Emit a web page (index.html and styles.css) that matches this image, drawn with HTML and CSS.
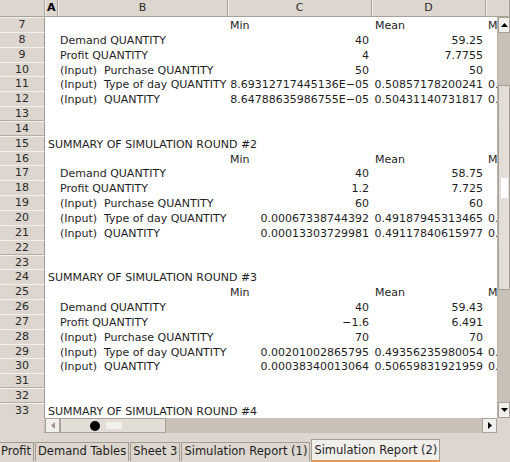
FILE: index.html
```html
<!DOCTYPE html>
<html>
<head>
<meta charset="utf-8">
<link rel="stylesheet" href="styles.css">
</head>
<body>
<div class="app">
  <div class="colhead">
    <div class="corner"></div>
    <div class="ch cur">A</div>
    <div class="ch">B</div>
    <div class="ch">C</div>
    <div class="ch">D</div>
    <div class="ch last"></div>
  </div>
  <div class="main">
    <div class="sheet">
      <div class="row"><div class="rn">7</div><div></div><div></div><div class="c">Min</div><div class="c l3">Mean</div><div class="c">M</div></div>
      <div class="row"><div class="rn">8</div><div></div><div class="c">Demand QUANTITY</div><div class="c r">40</div><div class="c r">59.25</div><div></div></div>
      <div class="row"><div class="rn">9</div><div></div><div class="c">Profit QUANTITY</div><div class="c r">4</div><div class="c r">7.7755</div><div></div></div>
      <div class="row"><div class="rn">10</div><div></div><div class="c">(Input)  Purchase QUANTITY</div><div class="c r">50</div><div class="c r">50</div><div></div></div>
      <div class="row"><div class="rn">11</div><div></div><div class="c">(Input)  Type of day QUANTITY</div><div class="c r">8.69312717445136E−05</div><div class="c r">0.50857178200241</div><div class="c">0.</div></div>
      <div class="row"><div class="rn">12</div><div></div><div class="c">(Input)  QUANTITY</div><div class="c r">8.64788635986755E−05</div><div class="c r">0.50431140731817</div><div class="c">0.</div></div>
      <div class="row"><div class="rn">13</div></div>
      <div class="row"><div class="rn">14</div></div>
      <div class="row"><div class="rn">15</div><div class="c title">SUMMARY OF SIMULATION ROUND #2</div></div>
      <div class="row"><div class="rn">16</div><div></div><div></div><div class="c">Min</div><div class="c l3">Mean</div><div class="c">M</div></div>
      <div class="row"><div class="rn">17</div><div></div><div class="c">Demand QUANTITY</div><div class="c r">40</div><div class="c r">58.75</div><div></div></div>
      <div class="row"><div class="rn">18</div><div></div><div class="c">Profit QUANTITY</div><div class="c r">1.2</div><div class="c r">7.725</div><div></div></div>
      <div class="row"><div class="rn">19</div><div></div><div class="c">(Input)  Purchase QUANTITY</div><div class="c r">60</div><div class="c r">60</div><div></div></div>
      <div class="row"><div class="rn">20</div><div></div><div class="c">(Input)  Type of day QUANTITY</div><div class="c r">0.00067338744392</div><div class="c r">0.49187945313465</div><div class="c">0.</div></div>
      <div class="row"><div class="rn">21</div><div></div><div class="c">(Input)  QUANTITY</div><div class="c r">0.00013303729981</div><div class="c r">0.49117840615977</div><div class="c">0.</div></div>
      <div class="row"><div class="rn">22</div></div>
      <div class="row"><div class="rn">23</div></div>
      <div class="row"><div class="rn">24</div><div class="c title">SUMMARY OF SIMULATION ROUND #3</div></div>
      <div class="row"><div class="rn">25</div><div></div><div></div><div class="c">Min</div><div class="c l3">Mean</div><div class="c">M</div></div>
      <div class="row"><div class="rn">26</div><div></div><div class="c">Demand QUANTITY</div><div class="c r">40</div><div class="c r">59.43</div><div></div></div>
      <div class="row"><div class="rn">27</div><div></div><div class="c">Profit QUANTITY</div><div class="c r">−1.6</div><div class="c r">6.491</div><div></div></div>
      <div class="row"><div class="rn">28</div><div></div><div class="c">(Input)  Purchase QUANTITY</div><div class="c r">70</div><div class="c r">70</div><div></div></div>
      <div class="row"><div class="rn">29</div><div></div><div class="c">(Input)  Type of day QUANTITY</div><div class="c r">0.00201002865795</div><div class="c r">0.49356235980054</div><div class="c">0.</div></div>
      <div class="row"><div class="rn">30</div><div></div><div class="c">(Input)  QUANTITY</div><div class="c r">0.00038340013064</div><div class="c r">0.50659831921959</div><div class="c">0.</div></div>
      <div class="row"><div class="rn">31</div></div>
      <div class="row"><div class="rn">32</div></div>
      <div class="row"><div class="rn">33</div><div class="c title">SUMMARY OF SIMULATION ROUND #4</div></div>
    </div>
    <div class="vscroll">
      <div class="btn"><svg width="7" height="4" viewBox="0 0 7 4"><path d="M0 4 L3.5 0 L7 4 Z" fill="#000"/></svg></div>
      <div class="vtrack-top"></div>
      <div class="vthumb"><div class="grip"></div></div>
      <div class="vtrack"></div>
      <div class="btn"><svg width="7" height="4" viewBox="0 0 7 4"><path d="M0 0 L3.5 4 L7 0 Z" fill="#000"/></svg></div>
    </div>
  </div>
  <div class="hbar">
    <div class="hcorner"></div>
    <div class="hscroll">
      <div class="hbtn"><svg width="4" height="7" viewBox="0 0 4 7"><path d="M4 0 L0 3.5 L4 7 Z" fill="#9a948c"/></svg></div>
      <div class="hthumb"><div class="dot"></div><div class="hgrip"></div></div>
      <div class="htrack"></div>
      <div class="hbtn"><svg width="4" height="7" viewBox="0 0 4 7"><path d="M0 0 L4 3.5 L0 7 Z" fill="#000"/></svg></div>
    </div>
    <div class="rcorner"></div>
  </div>
  <div class="tabs">
    <div class="tab first">Profit</div>
    <div class="tab">Demand Tables</div>
    <div class="tab">Sheet 3</div>
    <div class="tab">Simulation Report (1)</div>
    <div class="tab active">Simulation Report (2)</div>
  </div>
</div>
</body>
</html>
```
FILE: styles.css
```css
* { box-sizing: border-box; }
body {
  margin: 0;
  width: 510px;
  height: 462px;
  overflow: hidden;
  font-family: "DejaVu Sans", sans-serif;
  font-size: 11px;
  color: #1e1e1e;
  background: #dcd6ce;
}
.app { display: flex; flex-direction: column; width: 510px; height: 462px; }

.colhead {
  display: grid;
  grid-template-columns: 45px 13px 170px 144px 114px 24px;
  height: 17px;
  background: #dcd6ce;
  border-bottom: 1px solid #a8a198;
}
.colhead > div {
  border-right: 1px solid #aaa39a;
  box-shadow: inset 1px 0 #f3f0ec;
  text-align: center;
  line-height: 16px;
  color: #2a2a2a;
}
.colhead .corner { box-shadow: none; }
.colhead .cur { font-weight: bold; color: #000; text-align: left; padding-left: 2px; }

.main { display: flex; height: 401px; }
.sheet { width: 497px; overflow: hidden; background: #fff; }
.row {
  display: grid;
  grid-template-columns: 45px 13px 170px 144px 114px 40px;
  height: 14.85px;
}
.rn {
  background: #dcd6ce;
  text-align: center;
  border-top: 1px solid #f3f0ec;
  border-bottom: 1px solid #b4ada4;
  border-right: 1px solid #9f988f;
  line-height: 13px;
  color: #2a2a2a;
}
.c {
  white-space: pre;
  line-height: 15px;
  padding: 1px 2px 0;
  overflow: visible;
}
.r { text-align: right; padding-right: 3px; }
.l3 { padding-left: 3px; }
.title { grid-column: 2 / span 3; padding-left: 3px; }

.vscroll {
  width: 13px;
  display: flex;
  flex-direction: column;
  background: #c8c1b8;
  border-left: 1px dotted #b0a99f;
}
.btn {
  height: 16px;
  display: flex;
  align-items: center;
  justify-content: center;
  background: #f2f0ec;
  border: 1px solid #a8a198;
}
.vtrack-top { height: 52px; background: #c8c1b8; }
.vthumb {
  height: 205px;
  background: #e2ddd6;
  border: 1px solid #a8a198;
  display: flex;
  align-items: center;
  justify-content: center;
}
.grip {
  width: 7px;
  height: 20px;
  background-image: radial-gradient(circle, #fff 0.7px, transparent 0.9px);
  background-size: 2px 2px;
}
.vtrack { flex: 1; background: #c8c1b8; }

.hbar { display: flex; height: 15px; }
.hcorner { width: 45px; border-right: 1px dotted #b0a99f; }
.hscroll { width: 452px; display: flex; background: #c8c1b8; }
.hbtn {
  width: 15px;
  display: flex;
  align-items: center;
  justify-content: center;
  background: #f2f0ec;
  border: 1px solid #a8a198;
}
.hthumb {
  width: 106px;
  background: #e2ddd6;
  border: 1px solid #a8a198;
  display: flex;
  align-items: center;
  padding-left: 29px;
  gap: 6px;
}
.dot { width: 10px; height: 10px; border-radius: 50%; background: #000; }
.hgrip {
  width: 16px;
  height: 7px;
  background-image: radial-gradient(circle, #f4f2ef 0.7px, transparent 0.9px);
  background-size: 2px 2px;
}
.htrack { flex: 1; }
.rcorner { flex: 1; }

.tabs {
  flex: 1;
  display: flex;
  align-items: flex-end;
  gap: 1px;
  font-size: 11.5px;
  padding-bottom: 1px;
}
.tab {
  height: 19px;
  line-height: 17px;
  padding: 0 2px;
  border: 1px solid #a39c93;
  border-bottom: none;
  background: #dcd6ce;
  white-space: nowrap;
  color: #1e1e1e;
}
.tab.first { margin-left: -6px; padding-left: 6px; }
.tab.active {
  height: 23px;
  line-height: 20px;
  padding: 0 2px;
  background: #f1efeb;
  border-bottom: 2px solid #e69b5a;
  margin-bottom: -1px;
}
```
